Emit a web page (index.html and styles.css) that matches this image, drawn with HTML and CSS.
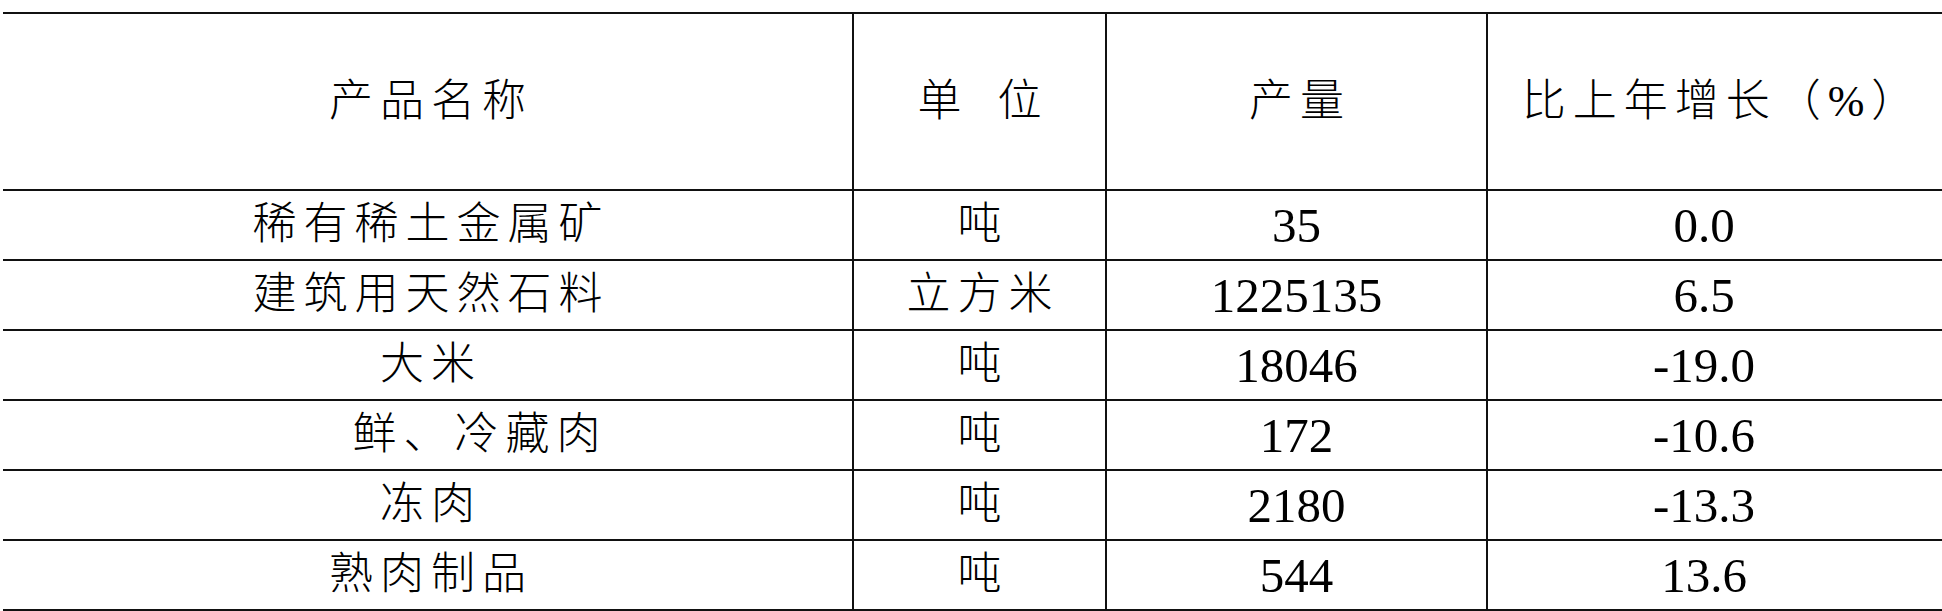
FILE: index.html
```html
<!DOCTYPE html>
<html lang="zh-CN">
<head>
<meta charset="utf-8">
<title>产品产量</title>
<link rel="stylesheet" href="styles.css">
</head>
<body>
<div class="table">
  <div class="row head">
    <div class="cell cjk">产品名称</div>
    <div class="cell cjk">单&ensp;位</div>
    <div class="cell cjk">产量</div>
    <div class="cell cjk last head-last">比上年增长（%）</div>
  </div>
  <div class="row">
    <div class="cell cjk">稀有稀土金属矿</div>
    <div class="cell cjk">吨</div>
    <div class="cell num">35</div>
    <div class="cell num last">0.0</div>
  </div>
  <div class="row">
    <div class="cell cjk">建筑用天然石料</div>
    <div class="cell cjk">立方米</div>
    <div class="cell num">1225135</div>
    <div class="cell num last">6.5</div>
  </div>
  <div class="row">
    <div class="cell cjk">大米</div>
    <div class="cell cjk">吨</div>
    <div class="cell num">18046</div>
    <div class="cell num last">-19.0</div>
  </div>
  <div class="row">
    <div class="cell cjk indent">鲜、冷藏肉</div>
    <div class="cell cjk">吨</div>
    <div class="cell num">172</div>
    <div class="cell num last">-10.6</div>
  </div>
  <div class="row">
    <div class="cell cjk">冻肉</div>
    <div class="cell cjk">吨</div>
    <div class="cell num">2180</div>
    <div class="cell num last">-13.3</div>
  </div>
  <div class="row end">
    <div class="cell cjk">熟肉制品</div>
    <div class="cell cjk">吨</div>
    <div class="cell num">544</div>
    <div class="cell num last">13.6</div>
  </div>
</div>
</body>
</html>
```
FILE: styles.css
```css
html, body {
  margin: 0;
  padding: 0;
  background: #ffffff;
}

body {
  font-family: "Liberation Serif", "Noto Sans CJK SC", serif;
  color: #000000;
  overflow: hidden;
}

.table {
  margin: 12px 0 0 3px;
  width: 1939px;
}

.row {
  display: grid;
  grid-template-columns: 849px 253px 381px 456px;
  height: 68px;
  border-top: 2px solid #111111;
}

.row.head {
  height: 175px;
}

.row.end {
  border-bottom: 2px solid #111111;
}

.cell {
  display: flex;
  align-items: center;
  justify-content: center;
  line-height: 1;
  white-space: nowrap;
}

.cell + .cell {
  border-left: 2px solid #111111;
}

.cjk {
  font-size: 44px;
  font-weight: 300;
  letter-spacing: 7px;
  padding-left: 7px;
}

.num {
  font-size: 49px;
}

.last {
  padding-right: 22px;
}

.head-last {
  padding-left: 14px;
  padding-right: 0;
}

.indent {
  padding-left: 105px;
}
```
